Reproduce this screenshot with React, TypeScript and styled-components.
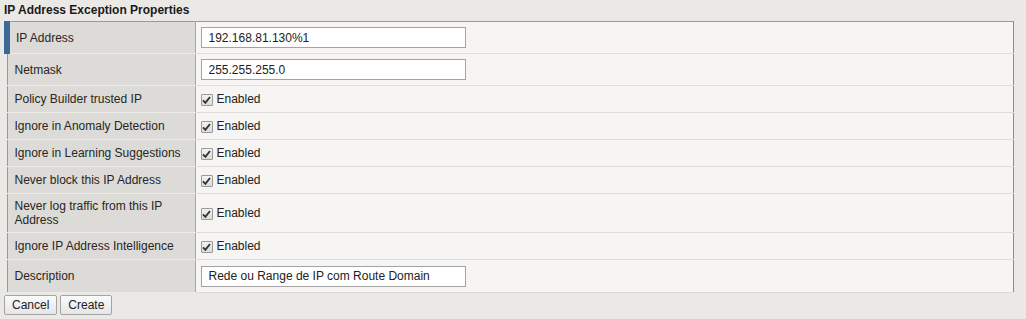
import React from "react";
import styled, { createGlobalStyle } from "styled-components";

const Global = createGlobalStyle`
  html, body { margin: 0; padding: 0; background: #eae9e5; }
  body { font-family: "Liberation Sans", Arial, sans-serif; font-size: 12px; color: #222; }
`;

const Page = styled.div`
  padding: 3px 12px 0 4px;
`;

const Title = styled.div`
  font-weight: bold;
  font-size: 12px;
  color: #1a1a1a;
  height: 18px;
  line-height: 14px;
`;

const Table = styled.table`
  width: 1010px;
  border-collapse: collapse;
  border: 1px solid #999;
  border-right-color: #8a8a8a;
  border-bottom-color: #8a8a8a;
  table-layout: fixed;
`;

const LabelCol = styled.col`
  width: 188px;
`;

const Row = styled.tr<{ $h: number }>`
  height: ${(p) => p.$h}px;
`;

const Label = styled.td<{ $active?: boolean }>`
  background: #dcdbd7;
  border-bottom: 1px solid #ecebe8;
  border-right: 1px solid #a9a8a4;
  border-left: ${(p) => (p.$active ? "6px solid #3b6998" : "none")};
  padding: 0 6px 0 ${(p) => (p.$active ? 6 : 7)}px;
  vertical-align: middle;
  color: #262626;
  line-height: 14px;
`;

const Value = styled.td`
  background: #f6f5f3;
  border-bottom: 1px solid #dddcd8;
  padding: 0 0 0 5px;
  vertical-align: middle;
`;

const TextInput = styled.input`
  box-sizing: border-box;
  width: 265px;
  height: 21px;
  border: 1px solid #a3a3a3;
  background: #fff;
  font-family: "Liberation Sans", Arial, sans-serif;
  font-size: 12px;
  color: #222;
  padding: 0 0 0 7px;
  margin: 0;
  display: block;
  outline: none;
`;

const CheckWrap = styled.label`
  display: flex;
  align-items: center;
  gap: 4px;
  color: #222;
`;

const Box = styled.span`
  box-sizing: border-box;
  width: 12px;
  height: 12px;
  border: 1px solid #9a9a9a;
  border-radius: 1px;
  background: linear-gradient(#f2f2f2, #dcdcdc);
  display: inline-flex;
  align-items: center;
  justify-content: center;
  margin-top: 1px;
`;

const Buttons = styled.div`
  display: flex;
  gap: 3px;
  margin-top: 2px;
`;

const Button = styled.button`
  height: 20px;
  box-sizing: border-box;
  padding: 0 7px;
  border: 1px solid #a4a4a4;
  border-radius: 2px;
  background: linear-gradient(#fbfbfb, #e6e6e6);
  font-family: "Liberation Sans", Arial, sans-serif;
  font-size: 12px;
  color: #222;
  cursor: pointer;
`;

const Check = () => (
  <CheckWrap>
    <Box>
      <svg width="9" height="8" viewBox="0 0 9 8">
        <path d="M1 4.3 L3.4 6.8 L8 1" fill="none" stroke="#333" strokeWidth="1.9" />
      </svg>
    </Box>
    Enabled
  </CheckWrap>
);

const checkRows = [
  { label: "Policy Builder trusted IP", h: 27 },
  { label: "Ignore in Anomaly Detection", h: 27 },
  { label: "Ignore in Learning Suggestions", h: 27 },
  { label: "Never block this IP Address", h: 27 },
  { label: "Never log traffic from this IP Address", h: 39 },
  { label: "Ignore IP Address Intelligence", h: 27 },
];

export default function App() {
  return (
    <Page>
      <Global />
      <Title>IP Address Exception Properties</Title>
      <Table>
        <colgroup>
          <LabelCol />
          <col />
        </colgroup>
        <tbody>
          <Row $h={32}>
            <Label $active>IP Address</Label>
            <Value>
              <TextInput defaultValue="192.168.81.130%1" />
            </Value>
          </Row>
          <Row $h={32}>
            <Label>Netmask</Label>
            <Value>
              <TextInput defaultValue="255.255.255.0" />
            </Value>
          </Row>
          {checkRows.map((r) => (
            <Row $h={r.h} key={r.label}>
              <Label>{r.label}</Label>
              <Value>
                <Check />
              </Value>
            </Row>
          ))}
          <Row $h={33}>
            <Label>Description</Label>
            <Value>
              <TextInput defaultValue="Rede ou Range de IP com Route Domain" />
            </Value>
          </Row>
        </tbody>
      </Table>
      <Buttons>
        <Button>Cancel</Button>
        <Button>Create</Button>
      </Buttons>
    </Page>
  );
}
